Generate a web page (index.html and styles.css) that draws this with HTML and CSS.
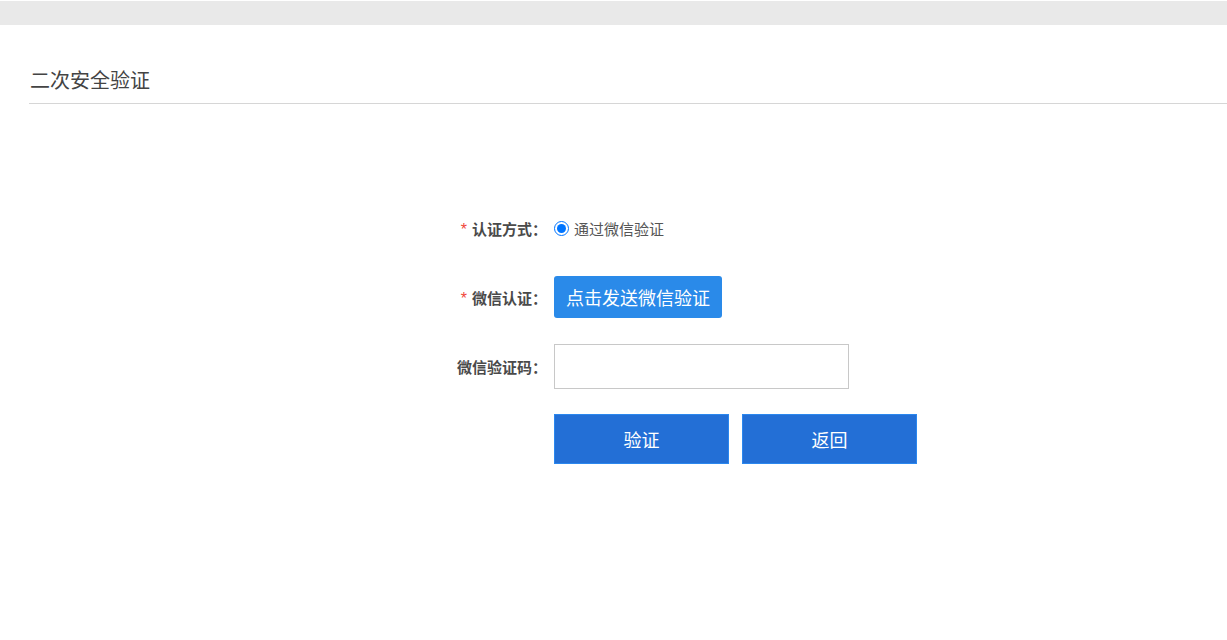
FILE: index.html
```html
<!DOCTYPE html>
<html>

<head>
    <meta charset="utf-8">
    <title>二次安全验证</title>

    <link rel="stylesheet" href="styles.css">
</head>

<body>
    <div class="topBar"></div>

    <div class="header">
        <div class="title">二次安全验证</div>
    </div>

    <div class="form">
        <div class="row rowMethod">
            <label class="label"><span class="star">*</span>认证方式：</label>
            <div class="control">
                <label class="radio"><input type="radio" name="method" checked> 通过微信验证</label>
            </div>
        </div>
        <div class="row rowSend">
            <label class="label"><span class="star">*</span>微信认证：</label>
            <div class="control">
                <button class="sendBtn">点击发送微信验证</button>
            </div>
        </div>
        <div class="row rowCode">
            <label class="label">微信验证码：</label>
            <div class="control">
                <input class="codeInput" type="text">
            </div>
        </div>
        <div class="row rowActions">
            <div class="label"></div>
            <div class="control actions">
                <button class="mainBtn">验证</button>
                <button class="mainBtn">返回</button>
            </div>
        </div>
    </div>
</body>

</html>
```

FILE: styles.css
```css
body {
    margin: 0;
    padding-top: 1px;
    background: #fff;
    font-family: "Liberation Sans", "Noto Sans CJK SC", sans-serif;
    color: #555;
}

.topBar {
    height: 24px;
    background: #e9e9e9;
}

.header {
    margin: 43px 0 0 29px;
    padding: 0 0 9px 1px;
    border-bottom: 1px solid #d6d6d6;
}

.title {
    font-size: 20px;
    line-height: 26px;
    color: #444;
}

.form {
    margin: 113px 0 0 430px;
}

.row {
    display: flex;
    align-items: center;
}

.label {
    width: 117px;
    text-align: right;
    font-size: 15px;
    font-weight: bold;
    color: #4a4a4a;
    flex-shrink: 0;
}

.star {
    color: #f0483a;
    margin-right: 5px;
    font-size: 16px;
    font-weight: normal;
}

.control {
    margin-left: 7px;
    display: flex;
    align-items: center;
}

.rowMethod {
    height: 22px;
}

.rowSend {
    margin-top: 37px;
}

.rowCode {
    margin-top: 26px;
}

.rowActions {
    margin-top: 25px;
}

.radio {
    font-size: 15px;
    color: #555;
    display: flex;
    align-items: center;
}

.radio input {
    margin: 0 5px 0 0;
    width: 15px;
    height: 15px;
}

.sendBtn {
    height: 42px;
    padding: 0 12px;
    border: none;
    border-radius: 3px;
    background: #2a8ae9;
    color: #fff;
    font-family: inherit;
    font-size: 18px;
}

.codeInput {
    width: 295px;
    height: 45px;
    box-sizing: border-box;
    border: 1px solid #c8c8c8;
    margin: 0;
    padding: 0 8px;
    font-size: 14px;
}

.actions {
    gap: 13px;
}

.mainBtn {
    width: 175px;
    height: 50px;
    border: 1px solid #2b87ee;
    background: #236fd6;
    color: #fff;
    font-family: inherit;
    font-size: 18px;
    cursor: pointer;
}
```
